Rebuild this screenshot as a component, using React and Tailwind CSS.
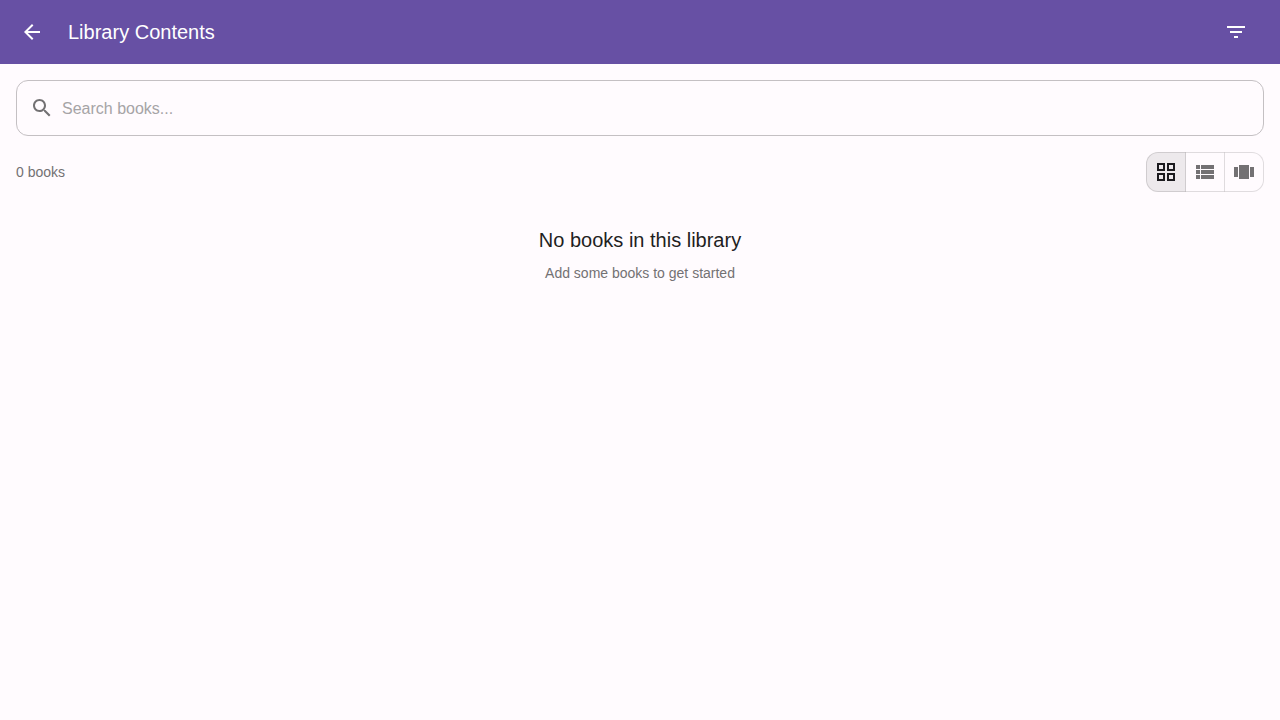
import { useState } from "react";

const ICONS = {
  back: "M20 11H7.83l5.59-5.59L12 4l-8 8 8 8 1.41-1.41L7.83 13H20z",
  filter: "M10 18h4v-2h-4zM3 6v2h18V6zm3 7h12v-2H6z",
  search:
    "M15.5 14h-.79l-.28-.27C15.41 12.59 16 11.11 16 9.5 16 5.91 13.09 3 9.5 3S3 5.91 3 9.5 5.91 16 9.5 16c1.61 0 3.09-.59 4.23-1.57l.27.28v.79l5 4.99L20.49 19zm-6 0C7.01 14 5 11.99 5 9.5S7.01 5 9.5 5 14 7.01 14 9.5 11.99 14 9.5 14",
  grid: "M3 3v8h8V3zm6 6H5V5h4zm-6 4v8h8v-8zm6 6H5v-4h4zm4-16v8h8V3zm6 6h-4V5h4zm-6 4v8h8v-8zm6 6h-4v-4h4z",
  list: "M3 14h4v-4H3zm0 5h4v-4H3zM3 9h4V5H3zm5 5h13v-4H8zm0 5h13v-4H8zM8 5v4h13V5z",
  carousel: "M7 19h10V5H7zm-5-2h4V7H2zM18 7v10h4V7z",
};

function Icon({ name }) {
  return (
    <svg viewBox="0 0 24 24" fill="currentColor" aria-hidden="true" className="size-6 shrink-0">
      <path d={ICONS[name]} />
    </svg>
  );
}

const VIEWS = [
  { id: "grid", label: "Grid view" },
  { id: "list", label: "List view" },
  { id: "carousel", label: "Carousel view" },
];

export default function App() {
  const [view, setView] = useState("grid");
  const [query, setQuery] = useState("");

  return (
    <div className="min-h-screen bg-[#fffbfe] font-['Liberation_Sans',Arial,sans-serif] text-[#1f1f1f]">
      <header className="flex h-16 items-center bg-[#6750a4] pr-6 pl-3 text-white">
        <button type="button" aria-label="Back" className="mr-4 rounded-full p-2">
          <Icon name="back" />
        </button>
        <h1 className="grow text-xl">Library Contents</h1>
        <button type="button" aria-label="Filter" className="rounded-full p-2">
          <Icon name="filter" />
        </button>
      </header>

      <main className="p-4">
        <label className="flex h-14 items-center gap-2 rounded-xl border border-[#c4c0c3] px-[13px] text-[#737173]">
          <Icon name="search" />
          <input
            type="text"
            aria-label="Search books"
            placeholder="Search books..."
            value={query}
            onChange={(e) => setQuery(e.target.value)}
            className="min-w-0 grow bg-transparent pt-0.5 text-base text-[#1f1f1f] outline-none placeholder:text-[#a6a4a6]"
          />
        </label>

        <div className="mt-4 flex items-center justify-between">
          <p className="text-sm text-[#737173]">0 books</p>
          <div role="group" aria-label="View mode" className="flex">
            {VIEWS.map(({ id, label }) => (
              <button
                key={id}
                type="button"
                aria-label={label}
                aria-pressed={view === id}
                onClick={() => setView(id)}
                className="-ml-px border border-black/12 p-[7px] text-[#737173] first:ml-0 first:rounded-l-xl last:rounded-r-xl not-first:border-l-transparent aria-pressed:bg-[#1c1b1f]/8 aria-pressed:text-[#1c1b1f]"
              >
                <Icon name={id} />
              </button>
            ))}
          </div>
        </div>

        <section className="py-8 text-center">
          <h2 className="mb-[7px] text-xl leading-8">No books in this library</h2>
          <p className="text-sm text-[#737173]">Add some books to get started</p>
        </section>
      </main>
    </div>
  );
}
